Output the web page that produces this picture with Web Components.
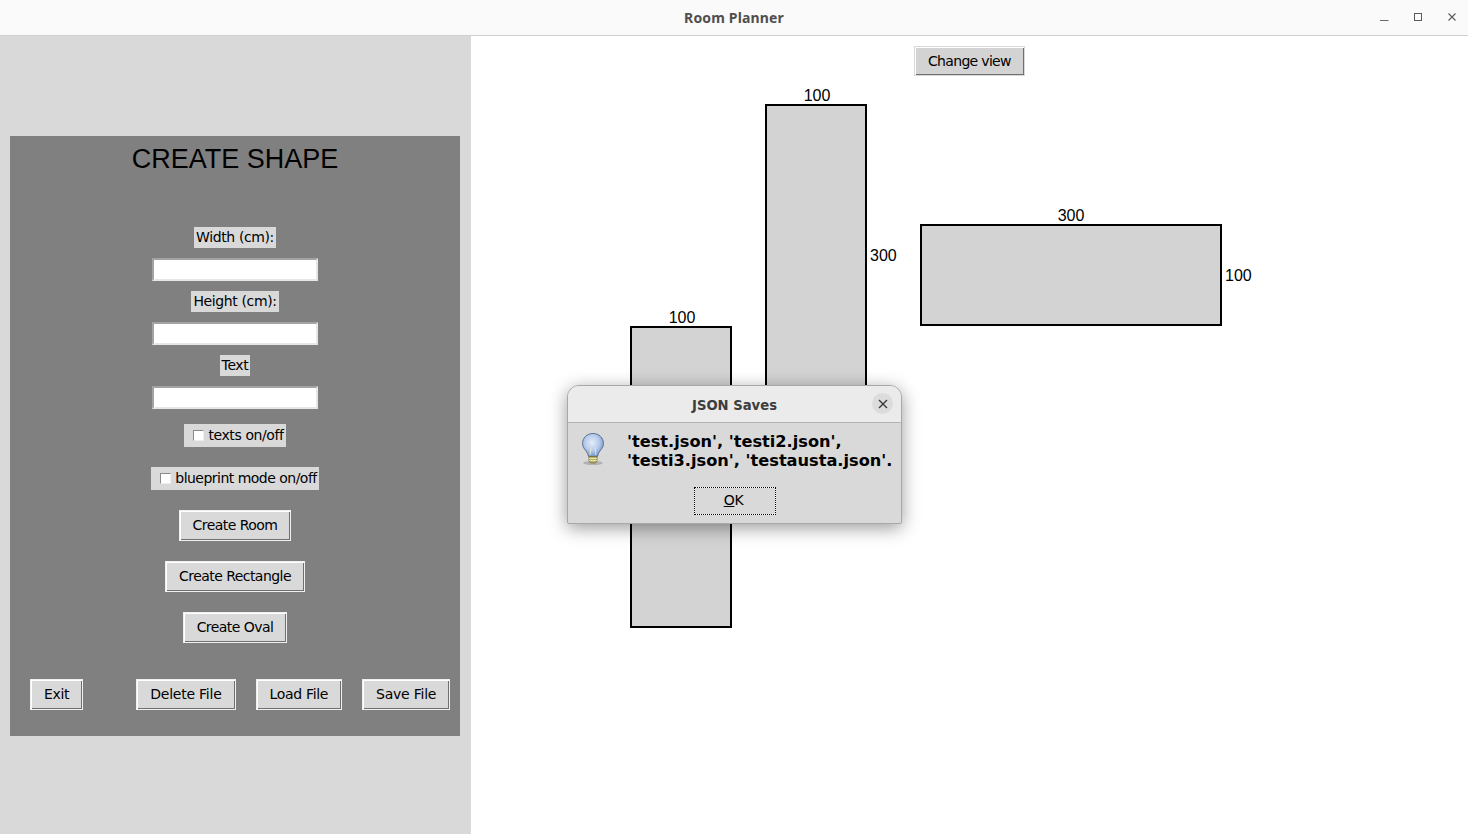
<!DOCTYPE html>
<html>
<head>
<meta charset="utf-8">
<title>Room Planner</title>
<style>
html, body { margin: 0; height: 100%; overflow: hidden; }
body { font-family: "DejaVu Sans", sans-serif; background: #fff; }
</style>
</head>
<body>
<room-planner></room-planner>
<script>
// small Tk looking widgets
const TK_FONT = `14px "DejaVu Sans", sans-serif`;

class TkButton extends HTMLElement {
	constructor() {
		super();
		const shadow = this.attachShadow({ mode: "open" });
		shadow.innerHTML = `<style>
			:host {
				display: inline-flex;
				box-sizing: border-box;
				height: 31px;
				padding: 0 13px 1px;
				align-items: center;
				justify-content: center;
				background: var(--btn-bg, #d9d9d9);
				color: #000;
				font: ${TK_FONT};
				letter-spacing: -.33px;
				border: 1px solid var(--btn-ring, #f0f0f0);
				box-shadow: inset 1px 1px 0 #fff, inset -1px -1px 0 #6f6f6f;
				white-space: nowrap;
			}
		</style><slot></slot>`;
	}
}

class TkLabel extends HTMLElement {
	constructor() {
		super();
		const shadow = this.attachShadow({ mode: "open" });
		shadow.innerHTML = `<style>
			:host {
				display: block;
				height: 21px;
				padding: 0 2px;
				background: #d9d9d9;
				color: #000;
				font: ${TK_FONT};
				line-height: 20px;
				letter-spacing: -.38px;
				white-space: nowrap;
			}
		</style><slot></slot>`;
	}
}

class TkEntry extends HTMLElement {
	constructor() {
		super();
		const shadow = this.attachShadow({ mode: "open" });
		shadow.innerHTML = `<style>
			:host {
				display: block;
				box-sizing: border-box;
				width: 166px;
				height: 23px;
				background: #fff;
				border: 2px solid;
				border-color: #a3a3a3 #e6e6e6 #e6e6e6 #a3a3a3;
			}
		</style>`;
	}
}

class TkCheck extends HTMLElement {
	constructor() {
		super();
		const shadow = this.attachShadow({ mode: "open" });
		shadow.innerHTML = `<style>
			:host {
				display: flex;
				align-items: center;
				box-sizing: border-box;
				height: 23px;
				padding: 0 2px 2px 9px;
				background: #d9d9d9;
				color: #000;
				font: ${TK_FONT};
				letter-spacing: -.4px;
				white-space: nowrap;
			}
			i {
				display: block;
				box-sizing: border-box;
				width: 11px;
				height: 11px;
				margin: 2px 4px 0 0;
				background: #fff;
				border: 1px solid;
				border-color: #8a8a8a #eee #eee #8a8a8a;
			}
		</style><i></i><slot></slot>`;
	}
}

class CreatePanel extends HTMLElement {
	constructor() {
		super();
		const shadow = this.attachShadow({ mode: "open" });
		shadow.innerHTML = `<style>
			:host {
				display: block;
				box-sizing: border-box;
				width: 450px;
				height: 600px;
				margin: 100px 0 0 10px;
				background: #808080;
			}
			h1 {
				margin: 0;
				height: 91px;
				padding-top: 7px;
				box-sizing: border-box;
				text-align: center;
				font: 400 27px/32px "Liberation Sans", sans-serif;
				color: #000;
			}
			.form {
				display: flex;
				flex-direction: column;
				align-items: center;
			}
			tk-entry { margin: 10px 0; }
			.t1 { margin-top: 5px; }
			.t2 { margin-top: 20px; letter-spacing: -.52px; }
			tk-button { margin-top: 20px; }
			.form tk-button { letter-spacing: -.55px; }
			.bottom {
				display: flex;
				margin: 36px 10px 0 20px;
			}
			.bottom tk-button { margin: 0; }
			.bottom .exit { margin-right: 53px; }
			.bottom .del, .bottom .load { margin-right: 20px; }
			.bottom .del, .bottom .save { letter-spacing: -.23px; }
		</style>
		<h1>CREATE SHAPE</h1>
		<div class="form">
			<tk-label>Width (cm):</tk-label>
			<tk-entry></tk-entry>
			<tk-label>Height (cm):</tk-label>
			<tk-entry></tk-entry>
			<tk-label>Text</tk-label>
			<tk-entry></tk-entry>
			<tk-check class="t1">texts on/off</tk-check>
			<tk-check class="t2">blueprint mode on/off</tk-check>
			<tk-button>Create Room</tk-button>
			<tk-button>Create Rectangle</tk-button>
			<tk-button>Create Oval</tk-button>
		</div>
		<div class="bottom">
			<tk-button class="exit">Exit</tk-button>
			<tk-button class="del">Delete File</tk-button>
			<tk-button class="load">Load File</tk-button>
			<tk-button class="save">Save File</tk-button>
		</div>`;
	}
}

// one shape on the canvas, place comes from attributes
class ShapeBox extends HTMLElement {
	static get observedAttributes() { return ["x", "y", "w", "h"]; }
	constructor() {
		super();
		const shadow = this.attachShadow({ mode: "open" });
		shadow.innerHTML = `<style>
			:host {
				position: absolute;
				box-sizing: border-box;
				background: #d3d3d3;
				border: 2px solid #000;
			}
			span {
				position: absolute;
				font: 16px/18px "Liberation Sans", sans-serif;
				color: #000;
			}
			.top { left: var(--top-shift, 0); right: 0; top: -19px; text-align: center; }
			.side { left: calc(100% + 5px); top: calc(50% - 8px); }
		</style><span class="top"></span><span class="side"></span>`;
	}
	attributeChangedCallback() {
		this.style.left = this.getAttribute("x") + "px";
		this.style.top = this.getAttribute("y") + "px";
		this.style.width = this.getAttribute("w") + "px";
		this.style.height = this.getAttribute("h") + "px";
	}
	connectedCallback() {
		this.shadowRoot.querySelector(".top").textContent = this.getAttribute("top-label");
		this.shadowRoot.querySelector(".side").textContent = this.getAttribute("side-label");
	}
}

class ShapeCanvas extends HTMLElement {
	constructor() {
		super();
		const shadow = this.attachShadow({ mode: "open" });
		shadow.innerHTML = `<style>
			:host {
				display: block;
				position: relative;
				flex: 1;
				background: #fff;
			}
			tk-button {
				position: absolute;
				left: 443px;
				top: 10px;
				height: 30px;
				padding-bottom: 0;
				letter-spacing: -.68px;
				--btn-bg: #d3d3d3;
				--btn-ring: #d9d9d9;
			}
		</style>
		<tk-button>Change view</tk-button>
		<shape-box style="--top-shift:2px" x="159" y="290" w="102" h="302" top-label="100" side-label=""></shape-box>
		<shape-box style="--top-shift:2px" x="294" y="68" w="102" h="302" top-label="100" side-label="300"></shape-box>
		<shape-box x="449" y="188" w="302" h="102" top-label="300" side-label="100"></shape-box>`;
	}
}

class JsonDialog extends HTMLElement {
	constructor() {
		super();
		const shadow = this.attachShadow({ mode: "open" });
		shadow.innerHTML = `<style>
			:host {
				position: absolute;
				left: 567px;
				top: 385px;
				width: 335px;
				height: 139px;
				box-sizing: border-box;
				display: flex;
				flex-direction: column;
				background: #d9d9d9;
				border: 1px solid #a8a8a8;
				border-radius: 12px 12px 2px 2px;
				box-shadow: 0 4px 18px rgba(0,0,0,.4);
				overflow: hidden;
			}
			header {
				box-sizing: border-box;
				height: 37px;
				padding-top: 2px;
				flex: none;
				display: flex;
				align-items: center;
				justify-content: center;
				position: relative;
				background: #ebebeb;
				border-bottom: 1px solid #b5b5b5;
				font: 700 13.2px "DejaVu Sans", sans-serif;
				color: #3d3d3d;
			}
			.close {
				position: absolute;
				right: 8px;
				top: 7px;
				width: 21px;
				height: 21px;
				border-radius: 50%;
				background: #dcdcdc;
				display: flex;
				align-items: center;
				justify-content: center;
			}
			.body {
				display: flex;
				height: 64px;
				flex: none;
			}
			.body svg { margin: 9px 0 0 12px; flex: none; }
			p {
				margin: 9px 0 0 21px;
				font: 700 16.2px/19px "DejaVu Sans", sans-serif;
				color: #000;
				white-space: nowrap;
			}
			.foot { display: flex; justify-content: center; }
			u { text-underline-offset: 1px; }
			.ok {
				box-sizing: border-box;
				width: 82px;
				height: 28px;
				margin-left: 1px;
				background: #fff;
				border: 1px dotted #000;
				font: ${TK_FONT};
				letter-spacing: -.33px;
				color: #000;
			}
			.ok span {
				display: flex;
				height: 100%;
				align-items: center;
				justify-content: center;
				padding: 0 3px 2px 0;
				box-sizing: border-box;
				background: #d9d9d9;
			}
		</style>
		<header>JSON Saves
			<div class="close"><svg width="10" height="10" viewBox="0 0 10 10"><path d="M1 1L9 9M9 1L1 9" stroke="#3a3a3a" stroke-width="1.4" fill="none"/></svg></div>
		</header>
		<div class="body">
			<svg width="26" height="34" viewBox="0 0 26 34">
				<defs>
					<radialGradient id="glass" cx="45%" cy="40%" r="60%">
						<stop offset="0" stop-color="#e6edf8"/>
						<stop offset=".6" stop-color="#b4c9ea"/>
						<stop offset="1" stop-color="#7596c9"/>
					</radialGradient>
				</defs>
				<ellipse cx="13" cy="31" rx="10" ry="2" fill="#000" opacity=".18"/>
				<path d="M13 1.5C6.8 1.5 2.5 6 2.5 11.5C2.5 16 6 18 7.6 21.5L8.6 24.5H17.4L18.4 21.5C20 18 23.5 16 23.5 11.5C23.5 6 19.2 1.5 13 1.5Z" fill="url(#glass)" stroke="#5f7391" stroke-width="1"/>
				<path d="M10 23L11 16M16 23L15 16" stroke="#e4e4dc" stroke-width="1" fill="none"/>
				<path d="M9 24.5H17V29.5L15 31H11L9 29.5Z" fill="#b9b468" stroke="#6f6c3c" stroke-width=".8"/>
				<path d="M9 26.5H17M9 28.5H17" stroke="#f0eeb8" stroke-width=".8"/>
			</svg>
			<p>'test.json', 'testi2.json',<br>'testi3.json', 'testausta.json'.</p>
		</div>
		<div class="foot"><div class="ok"><span><u>O</u>K</span></div></div>`;
	}
}

class RoomPlanner extends HTMLElement {
	constructor() {
		super();
		const shadow = this.attachShadow({ mode: "open" });
		shadow.innerHTML = `<style>
			:host {
				display: flex;
				flex-direction: column;
				position: relative;
				width: 1468px;
				height: 834px;
				overflow: hidden;
			}
			.bar {
				box-sizing: border-box;
				flex: none;
				height: 36px;
				display: flex;
				align-items: center;
				justify-content: center;
				position: relative;
				background: #fafafa;
				border-bottom: 1px solid #cfcfcf;
				font: 700 14px "Noto Sans", "DejaVu Sans", sans-serif;
				letter-spacing: .15px;
				color: #4f4f4f;
			}
			.ctl {
				position: absolute;
				right: 11px;
				top: 12px;
				display: flex;
				gap: 24px;
			}
			.ctl svg:first-child { margin-left: 1px; margin-right: -1px; }
			.main { flex: 1; display: flex; min-height: 0; }
			.side { width: 471px; flex: none; background: #d9d9d9; }
		</style>
		<div class="bar">Room Planner
			<div class="ctl">
				<svg width="10" height="10" viewBox="0 0 10 10"><path d="M0 8.5H8.5" stroke="#6a6a6a" stroke-width="1"/></svg>
				<svg width="10" height="10" viewBox="0 0 10 10"><rect x="1.5" y="1.5" width="7" height="7" fill="none" stroke="#5a5a5a" stroke-width="1"/></svg>
				<svg width="10" height="10" viewBox="0 0 10 10"><path d="M1.5 1.5L8.5 8.5M8.5 1.5L1.5 8.5" stroke="#5a5a5a" stroke-width="1.1" fill="none"/></svg>
			</div>
		</div>
		<div class="main">
			<div class="side"><create-panel></create-panel></div>
			<shape-canvas></shape-canvas>
		</div>
		<json-dialog></json-dialog>`;
	}
}

customElements.define('tk-button', TkButton);
customElements.define('tk-label', TkLabel);
customElements.define('tk-entry', TkEntry);
customElements.define('tk-check', TkCheck);
customElements.define('create-panel', CreatePanel);
customElements.define('shape-box', ShapeBox);
customElements.define('shape-canvas', ShapeCanvas);
customElements.define('json-dialog', JsonDialog);
customElements.define('room-planner', RoomPlanner);
</script>
</body>
</html>
